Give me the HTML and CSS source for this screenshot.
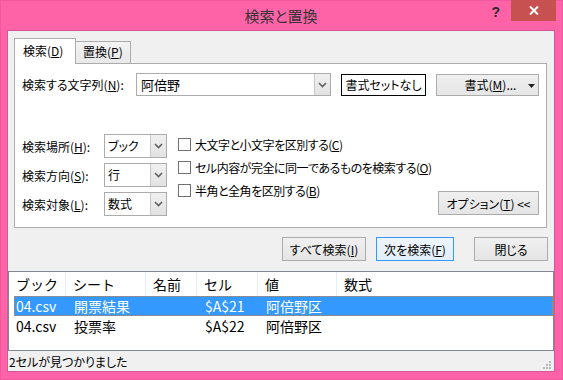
FILE: index.html
```html
<!DOCTYPE html>
<html lang="ja">
<head>
<meta charset="utf-8">
<title>検索と置換</title>
<link rel="stylesheet" href="styles.css">
</head>
<body>
<div class="window">
  <div class="titlebar">
    <div class="title">検索と置換</div>
    <div class="controls">
      <span class="help">?</span>
      <span class="close"><svg width="10" height="9" viewBox="0 0 10 9"><path d="M1 0.5 L9 8.5 M9 0.5 L1 8.5" stroke="#fff" stroke-width="2"/></svg></span>
    </div>
  </div>
  <div class="client">
    <div class="tabs-area">
      <div class="tabs">
        <div class="tab active">検索(<u>D</u>)</div>
        <div class="tab">置換(<u>P</u>)</div>
      </div>
      <div class="pane">
        <div class="row1">
          <div class="lbl lbl-find">検索する文字列(<u>N</u>):</div>
          <div class="combo">
            <span class="combo-text">阿倍野</span>
            <span class="dd dd-combo"><svg width="9" height="6" viewBox="0 0 9 6"><path d="M1 1 L4.5 4.5 L8 1" stroke="#606060" stroke-width="1.6" fill="none"/></svg></span>
          </div>
          <div class="btn btn-none">書式セットなし</div>
          <div class="btn btn-fmt"><span class="fmt-text">書式(<u>M</u>)...</span><svg class="fmt-arrow" width="7" height="4" viewBox="0 0 7 4"><path d="M0 0 H7 L3.5 4 Z" fill="#222"/></svg></div>
        </div>
        <div class="lower">
          <div class="fields">
            <div class="field"><div class="lbl lbl-field">検索場所(<u>H</u>):</div><div class="select"><span class="sel-text">ブック</span><span class="dd"><svg width="9" height="6" viewBox="0 0 9 6"><path d="M1 1 L4.5 4.5 L8 1" stroke="#606060" stroke-width="1.6" fill="none"/></svg></span></div></div>
            <div class="field"><div class="lbl lbl-field">検索方向(<u>S</u>):</div><div class="select"><span class="sel-text">行</span><span class="dd"><svg width="9" height="6" viewBox="0 0 9 6"><path d="M1 1 L4.5 4.5 L8 1" stroke="#606060" stroke-width="1.6" fill="none"/></svg></span></div></div>
            <div class="field"><div class="lbl lbl-field">検索対象(<u>L</u>):</div><div class="select"><span class="sel-text">数式</span><span class="dd"><svg width="9" height="6" viewBox="0 0 9 6"><path d="M1 1 L4.5 4.5 L8 1" stroke="#606060" stroke-width="1.6" fill="none"/></svg></span></div></div>
          </div>
          <div class="checks">
            <div class="check"><span class="box"></span><span class="ctext">大文字と小文字を区別する(<u>C</u>)</span></div>
            <div class="check"><span class="box"></span><span class="ctext">セル内容が完全に同一であるものを検索する(<u>O</u>)</span></div>
            <div class="check"><span class="box"></span><span class="ctext">半角と全角を区別する(<u>B</u>)</span></div>
          </div>
          <div class="btn btn-opt">オプション(<u>T</u>) &lt;&lt;</div>
        </div>
      </div>
    </div>
    <div class="actions">
      <div class="btn btn-all">すべて検索(<u>I</u>)</div>
      <div class="btn btn-next">次を検索(<u>F</u>)</div>
      <div class="btn btn-close">閉じる</div>
    </div>
    <div class="list">
      <div class="lhead">
        <div class="hc">ブック</div>
        <div class="hc">シート</div>
        <div class="hc">名前</div>
        <div class="hc">セル</div>
        <div class="hc">値</div>
        <div class="hc last">数式</div>
      </div>
      <div class="lrow selected">
        <div class="c c1">04.csv</div>
        <div class="c">開票結果</div>
        <div class="c"></div>
        <div class="c">$A$21</div>
        <div class="c">阿倍野区</div>
        <div class="c"></div>
      </div>
      <div class="lrow">
        <div class="c c1">04.csv</div>
        <div class="c">投票率</div>
        <div class="c"></div>
        <div class="c">$A$22</div>
        <div class="c">阿倍野区</div>
        <div class="c"></div>
      </div>
    </div>
    <div class="status">
      <span class="status-text">2セルが見つかりました</span>
      <svg class="grip" width="9" height="9" viewBox="0 0 9 9"><g fill="#b8b8b8"><rect x="6" y="0" width="2" height="2"/><rect x="3" y="3" width="2" height="2"/><rect x="6" y="3" width="2" height="2"/><rect x="0" y="6" width="2" height="2"/><rect x="3" y="6" width="2" height="2"/><rect x="6" y="6" width="2" height="2"/></g></svg>
    </div>
  </div>
</div>
</body>
</html>
```
FILE: styles.css
```css
* { box-sizing: border-box; }
html, body { margin: 0; padding: 0; }
body {
  width: 563px;
  height: 380px;
  overflow: hidden;
  font-family: "Noto Sans CJK JP", "Noto Sans", sans-serif;
  font-size: 12px;
  color: #000;
  font-feature-settings: "palt";
}
u { text-decoration: underline; text-underline-offset: 1px; }

.window {
  width: 563px;
  height: 380px;
  background: #fe63a8;
  border: 1px solid #f158a0;
  padding: 0 7px 7px 6px;
  display: flex;
  flex-direction: column;
}

.titlebar {
  height: 29px;
  display: grid;
  grid-template-columns: 1fr auto 1fr;
  align-items: start;
}
.title {
  grid-column: 2;
  font-size: 15px;
  line-height: 20px;
  padding-top: 5px;
  color: #333;
}
.controls {
  grid-column: 3;
  justify-self: end;
  display: flex;
  align-items: flex-start;
  margin-top: -1px;
  margin-right: -1px;
}
.help {
  font-family: "Liberation Sans", sans-serif;
  font-weight: bold;
  font-size: 14px;
  line-height: 14px;
  color: #2a2a2a;
  margin-top: 5px;
  margin-right: 11px;
}
.close {
  width: 45px;
  height: 21px;
  background: #c75050;
  display: flex;
  align-items: center;
  justify-content: center;
}

.client {
  flex: 1;
  background: #f0f0f0;
  border: 1px solid #d9559b;
  display: flex;
  flex-direction: column;
}

.tabs-area { padding: 7px 7px 0 6px; }
.tabs {
  display: flex;
  align-items: flex-end;
  height: 25px;
  position: relative;
  z-index: 1;
}
.tab {
  height: 22px;
  width: 55px;
  border: 1px solid #acacac;
  border-left: none;
  border-bottom: none;
  background: linear-gradient(#f3f3f3, #e8e8e8);
  padding-left: 7px;
  line-height: 20px;
}
.tab.active {
  width: 62px;
  height: 26px;
  margin-bottom: -1px;
  border-left: 1px solid #acacac;
  background: #fff;
  padding-left: 8px;
  line-height: 24px;
}

.pane {
  height: 165px;
  background: #fff;
  border: 1px solid #acacac;
}

.row1 {
  display: flex;
  align-items: center;
  height: 23px;
  margin-top: 9px;
  padding-left: 7px;
}
.lbl-find { width: 114px; }
.combo {
  width: 195px;
  height: 23px;
  border: 1px solid #acacac;
  display: flex;
  background: #fff;
}
.combo-text { flex: 1; padding-left: 4px; line-height: 21px; font-size: 13px; }
.dd {
  width: 16px;
  background: linear-gradient(#f0f0f0, #e2e2e2);
  border-left: 1px solid #c8c8c8;
  display: flex;
  align-items: center;
  justify-content: center;
}

.btn {
  height: 22px;
  border: 1px solid #acacac;
  background: linear-gradient(#f0f0f0, #e5e5e5);
  display: flex;
  align-items: center;
  justify-content: center;
  white-space: nowrap;
}
.btn-none {
  width: 85px;
  margin-left: 10px;
  background: #fff;
  border: 1px solid #000;
}
.btn-fmt {
  width: 103px;
  margin-left: 10px;
  position: relative;
}
.fmt-text { margin-left: 6px; }
.fmt-arrow { position: absolute; right: 3px; top: 9px; }

.lower {
  display: flex;
  margin-top: 38px;
  padding-left: 7px;
  padding-right: 7px;
}
.fields { display: flex; flex-direction: column; gap: 5px; flex: none; }
.field { display: flex; align-items: center; height: 24px; }
.lbl-field { width: 82px; }
.select {
  width: 63px;
  height: 24px;
  border: 1px solid #acacac;
  display: flex;
  background: #fff;
}
.sel-text { flex: 1; padding-left: 3px; line-height: 22px; }

.checks {
  display: flex;
  flex-direction: column;
  margin-left: 11px;
  padding-top: 4px;
  flex: none;
}
.check {
  display: flex;
  align-items: flex-start;
  height: 23px;
  white-space: nowrap;
}
.box {
  width: 13px;
  height: 13px;
  border: 1px solid #707070;
  background: #fff;
  margin-right: 4px;
  flex: none;
}
.ctext { line-height: 13px; margin-top: 0; letter-spacing: -0.5px; }

.btn-opt {
  width: 101px;
  height: 24px;
  margin-left: auto;
  align-self: flex-end;
  margin-bottom: 1px;
  flex: none;
}

.actions {
  display: flex;
  justify-content: flex-end;
  margin-top: 9px;
  padding-right: 6px;
}
.actions .btn { height: 24px; }
.btn-all { width: 84px; }
.btn-next {
  width: 78px;
  margin-left: 10px;
  border-color: #3399ff;
  background: linear-gradient(#eef5fc, #e3eef9);
}
.btn-close { width: 74px; margin-left: 20px; }

.list {
  margin-top: 10px;
  height: 80px;
  border: 1px solid #828790;
  background: #fff;
  font-size: 14px;
  font-feature-settings: normal;
}
.lhead {
  display: grid;
  grid-template-columns: 57px 80px 51px 61px 79px 1fr;
  height: 24px;
}
.hc {
  border-right: 1px solid #e7edf5;
  padding-left: 7px;
  line-height: 24px;
}
.hc.last { border-right: none; }
.lrow {
  display: grid;
  grid-template-columns: 52px 80px 51px 61px 79px 1fr;
  height: 20px;
  margin-left: 5px;
  border: 1px solid transparent;
}
.lrow .c { padding-left: 7px; line-height: 18px; white-space: nowrap; }
.lrow .c1 { padding-left: 1px; }
.lrow.selected {
  background: #3399ff;
  color: #fff;
  border: 1px dotted #e0802a;
}

.status {
  flex: 1;
  display: flex;
  align-items: center;
  padding-left: 1px;
  padding-right: 2px;
}
.status-text { flex: 1; line-height: 19px; }
.grip { align-self: flex-end; margin-bottom: 1px; }
```
